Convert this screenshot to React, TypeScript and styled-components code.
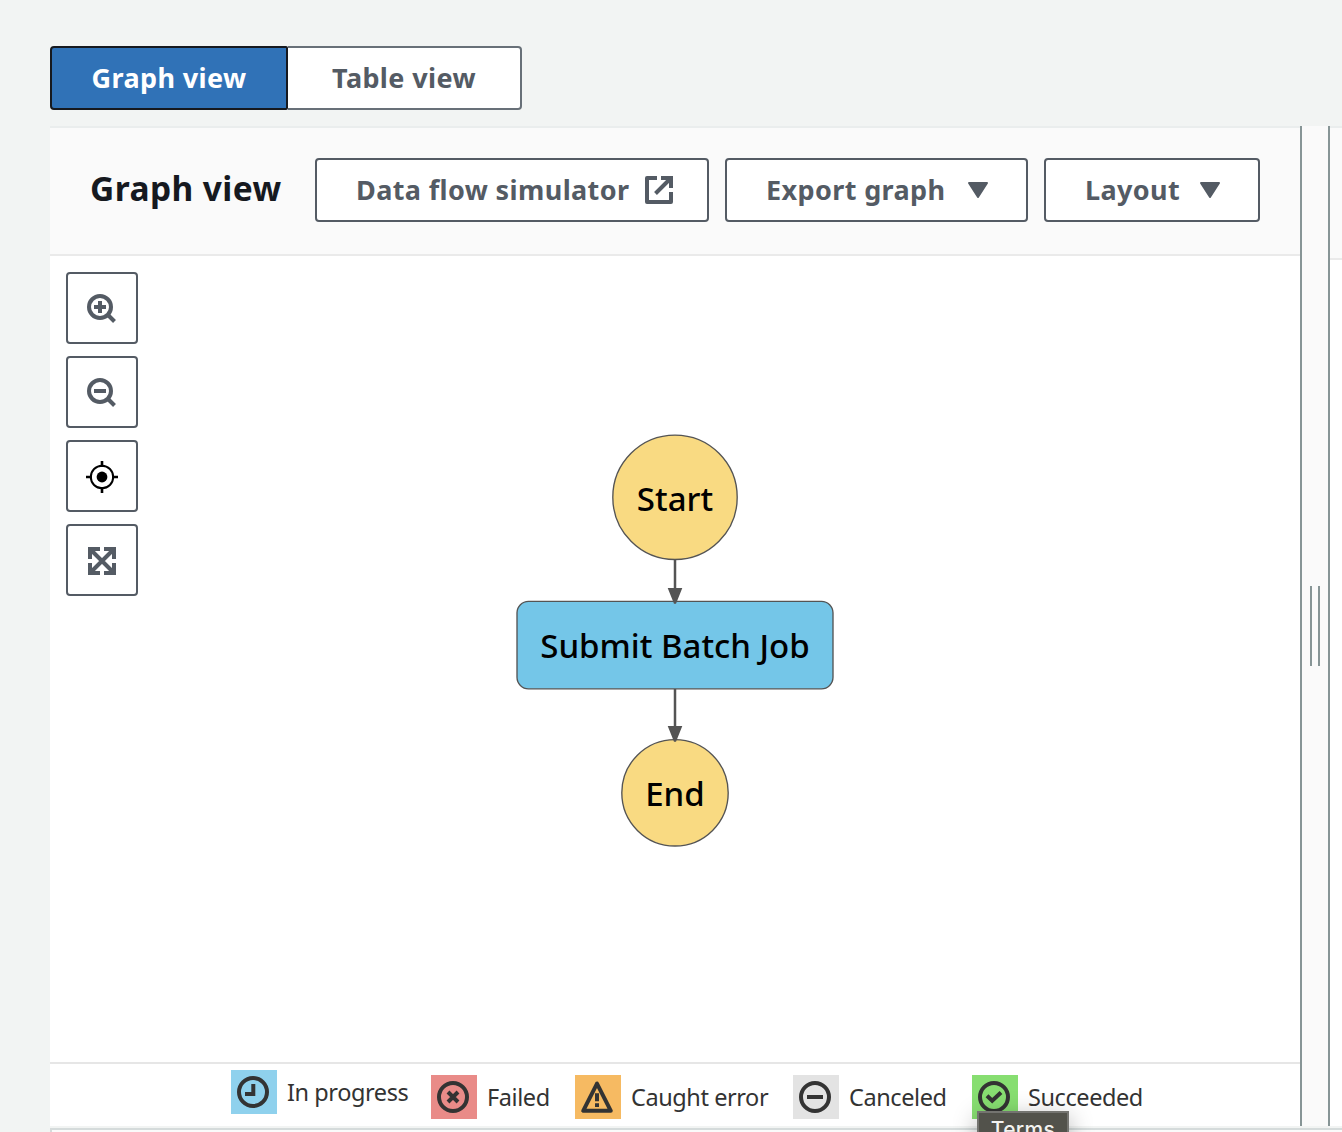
import React from "react";
import styled, { createGlobalStyle, css } from "styled-components";

const GlobalStyle = createGlobalStyle`
  * { box-sizing: border-box; }
  body {
    margin: 0;
    background: #f2f4f3;
    font-family: "Noto Sans", "Open Sans", sans-serif;
    color: #16191f;
  }
`;

const Page = styled.div`
  height: 1132px;
  overflow: hidden;
  display: flex;
  flex-direction: column;
  padding: 46px 0 0 50px;
`;

const Tabs = styled.div`
  display: flex;
  height: 64px;
  flex: none;
  margin-bottom: 16px;
`;

const buttonText = css`
  font-family: inherit;
  font-size: 27px;
  font-weight: 700;
  line-height: 38px;
  letter-spacing: 0.38px;
  white-space: nowrap;
`;

const Tab = styled.button<{ $active?: boolean }>`
  ${buttonText}
  width: ${(p) => (p.$active ? 238 : 234)}px;
  padding: 0 0 1px;
  border: 2px solid ${(p) => (p.$active ? "#16191f" : "#687078")};
  border-left-width: ${(p) => (p.$active ? 2 : 0)}px;
  border-radius: ${(p) => (p.$active ? "4px 2px 2px 4px" : "0 4px 4px 0")};
  background: ${(p) => (p.$active ? "#3072b7" : "#ffffff")};
  color: ${(p) => (p.$active ? "#ffffff" : "#545b64")};
`;

const Split = styled.div`
  display: grid;
  grid-template-columns: 1250px 30px 1fr;
  height: 1000px;
  flex: none;
`;

const Panel = styled.section`
  display: flex;
  flex-direction: column;
  background: #ffffff;
`;

const PanelHeader = styled.header<{ $height: number }>`
  display: flex;
  align-items: center;
  justify-content: space-between;
  flex: none;
  height: ${(p) => p.$height}px;
  padding: 0 40px 2px;
  background: #fafafa;
  border-top: 2px solid #eaeded;
  border-bottom: 2px solid #eaeaea;
`;

const Title = styled.h2`
  margin: 0;
  padding-bottom: 4px;
  font-size: 33.5px;
  line-height: 46px;
  font-weight: 700;
  letter-spacing: 0.42px;
`;

const Actions = styled.div`
  display: flex;
  gap: 16px;
`;

const ActionButton = styled.button<{ $width: number }>`
  ${buttonText}
  display: flex;
  align-items: center;
  justify-content: space-between;
  width: ${(p) => p.$width}px;
  height: 64px;
  padding: 0 32px 0 39px;
  border: 2px solid #545b64;
  border-radius: 4px;
  background: #ffffff;
  color: #545b64;
`;

const ActionLabel = styled.span`
  padding-bottom: 1px;
`;

const Icon = styled.svg`
  display: block;
  flex: none;
  width: 32px;
  height: 32px;
  overflow: visible;
  fill: none;
  stroke: currentColor;
  stroke-width: 4;
`;

const Canvas = styled.div`
  position: relative;
  flex: 1;
  min-height: 0;
`;

const Diagram = styled.svg`
  display: block;
  width: 1250px;
  height: 806px;
`;

const NodeLabel = styled.text`
  font-size: 33px;
  font-weight: 500;
  fill: #000000;
  text-anchor: middle;
`;

const ZoomTools = styled.div`
  position: absolute;
  top: 16px;
  left: 16px;
  display: flex;
  flex-direction: column;
  gap: 12px;
`;

const ToolButton = styled.button<{ $dark?: boolean }>`
  display: flex;
  align-items: center;
  justify-content: center;
  width: 72px;
  height: 72px;
  padding: 0;
  border: 2px solid #545b64;
  border-radius: 4px;
  background: #ffffff;
  color: ${(p) => (p.$dark ? "#000000" : "#545b64")};
`;

const Legend = styled.footer`
  display: flex;
  gap: 24px;
  flex: none;
  height: 64px;
  padding: 6px 0 0 181px;
  border-top: 2px solid #e6e6e6;
`;

const LegendItem = styled.div<{ $width: number; $raised?: boolean }>`
  display: flex;
  align-items: center;
  gap: 10px;
  width: ${(p) => p.$width}px;
  height: 44px;
  margin-top: ${(p) => (p.$raised ? 0 : 5)}px;
  font-size: 23.5px;
  line-height: 32px;
  letter-spacing: -0.42px;
  color: #333333;
  white-space: nowrap;
`;

const Swatch = styled.span<{ $color: string }>`
  flex: none;
  width: 46px;
  height: 44px;
  padding: 6px;
  background: ${(p) => p.$color};
`;

const Splitter = styled.div`
  display: flex;
  align-items: center;
  justify-content: center;
  gap: 6px;
  border: solid #879596;
  border-width: 0 2px;
  background: #fafafa;
`;

const Grip = styled.i`
  width: 2px;
  height: 80px;
  background: #879596;
`;

const NextSection = styled.div`
  flex: none;
  height: 40px;
  margin-top: 2px;
  border: solid #d5dbdb;
  border-width: 2px 0 0 2px;
  background: #fafafa;
`;

const Tooltip = styled.div`
  position: absolute;
  top: 1111px;
  left: 977px;
  width: 92px;
  height: 40px;
  border: 2px solid #747470;
  background: #52524b;
  color: #f2f2f0;
  font-family: Inter, "Liberation Sans", sans-serif;
  font-size: 21px;
  font-weight: 500;
  line-height: 34px;
  letter-spacing: 0.3px;
  text-align: center;
  box-shadow: 0 6px 24px rgba(0, 0, 0, 0.3);
`;

const Frame = styled.div`
  position: relative;
  height: 1132px;
  overflow: hidden;
`;

const ExternalIcon = () => (
  <Icon viewBox="0 0 32 32">
    <path d="M14 4H4v24h24V18M18 4h10v10M28 4 12.5 19.5" strokeLinejoin="round" />
    <path d="M24 2h6v6z" fill="currentColor" stroke="none" />
  </Icon>
);

const CaretIcon = () => (
  <Icon viewBox="0 0 32 32">
    <path d="M7 9h18l-9 14z" fill="currentColor" strokeWidth={2} strokeLinejoin="round" />
  </Icon>
);

const Magnifier = ({ plus }: { plus?: boolean }) => (
  <Icon viewBox="0 0 32 32">
    <circle cx="14" cy="15" r="11" />
    <path d={plus ? "M8 15h12M14 9v12" : "M8 15h12"} />
    <path d="m21.5 22.5 7 7" />
  </Icon>
);

const TargetIcon = () => (
  <Icon viewBox="0 0 32 32">
    <circle cx="16" cy="17" r="11.2" strokeWidth={2} />
    <circle cx="16" cy="17" r="5.4" fill="currentColor" stroke="none" />
    <path d="M0 17h6M26 17h6M16 1v6M16 27v6" strokeWidth={2.6} />
  </Icon>
);

const ExpandIcon = () => (
  <Icon viewBox="0 0 32 32">
    <path d="M14 5H4v10M18 5h10v10M14 29H4V19M18 29h10V19M5 6l22 22M27 6 5 28" />
  </Icon>
);

const legend = [
  { label: "In progress", color: "#8fd1ed", width: 176, raised: true, mark: <path d="M16.3 8v10H8" /> },
  { label: "Failed", color: "#e98b88", width: 120, mark: <path d="m11 11 10 10M21 11 11 21" /> },
  { label: "Caught error", color: "#f6ba62", width: 194, triangle: true, mark: <path d="M16 12.3v8M16 22.3V26" /> },
  { label: "Canceled", color: "#e3e3e3", width: 155, mark: <path d="M8 16h16" /> },
  { label: "Succeeded", color: "#87de71", width: 170, mark: <path d="m9 14.8 5.2 5L23 11.5" /> },
];

export default function App() {
  return (
    <Frame>
      <GlobalStyle />
      <Page>
        <Tabs>
          <Tab $active>Graph view</Tab>
          <Tab>Table view</Tab>
        </Tabs>
        <Split>
          <Panel>
            <PanelHeader $height={130}>
              <Title>Graph view</Title>
              <Actions>
                <ActionButton $width={394}>
                  <ActionLabel>Data flow simulator</ActionLabel>
                  <ExternalIcon />
                </ActionButton>
                <ActionButton $width={303}>
                  <ActionLabel>Export graph</ActionLabel>
                  <CaretIcon />
                </ActionButton>
                <ActionButton $width={216}>
                  <ActionLabel>Layout</ActionLabel>
                  <CaretIcon />
                </ActionButton>
              </Actions>
            </PanelHeader>
            <Canvas>
              <Diagram viewBox="0 0 1250 806">
                <g stroke="#545454" strokeWidth={1.35}>
                  <circle cx="625" cy="241.3" r="62.2" fill="#f9da82" />
                  <rect x="467" y="345.3" width="316" height="87.5" rx="11.5" fill="#74c6e8" />
                  <circle cx="625" cy="536.8" r="53.2" fill="#f9da82" />
                </g>
                <path d="M625 303.5V335M625 433V472" stroke="#545454" strokeWidth={2.5} />
                <path d="M617.7 332h14.6L626 347.7h-2zM617.7 470h14.6L626 485.7h-2z" fill="#545454" />
                <NodeLabel x="625" y="255">Start</NodeLabel>
                <NodeLabel x="625" y="401.7">Submit Batch Job</NodeLabel>
                <NodeLabel x="625" y="549.8">End</NodeLabel>
              </Diagram>
              <ZoomTools>
                <ToolButton aria-label="Zoom in">
                  <Magnifier plus />
                </ToolButton>
                <ToolButton aria-label="Zoom out">
                  <Magnifier />
                </ToolButton>
                <ToolButton $dark aria-label="Center">
                  <TargetIcon />
                </ToolButton>
                <ToolButton aria-label="Fit">
                  <ExpandIcon />
                </ToolButton>
              </ZoomTools>
            </Canvas>
            <Legend>
              {legend.map((item) => (
                <LegendItem key={item.label} $width={item.width} $raised={item.raised}>
                  <Swatch $color={item.color}>
                    <Icon viewBox="0 0 32 32">
                      {item.triangle ? (
                        <path d="M16 2.6 2.2 29.8h27.6z" strokeLinejoin="round" />
                      ) : (
                        <circle cx="16" cy="16" r="14" />
                      )}
                      {item.mark}
                    </Icon>
                  </Swatch>
                  {item.label}
                </LegendItem>
              ))}
            </Legend>
          </Panel>
          <Splitter>
            <Grip />
            <Grip />
          </Splitter>
          <Panel>
            <PanelHeader $height={134} />
          </Panel>
        </Split>
        <NextSection />
      </Page>
      <Tooltip>Terms</Tooltip>
    </Frame>
  );
}
